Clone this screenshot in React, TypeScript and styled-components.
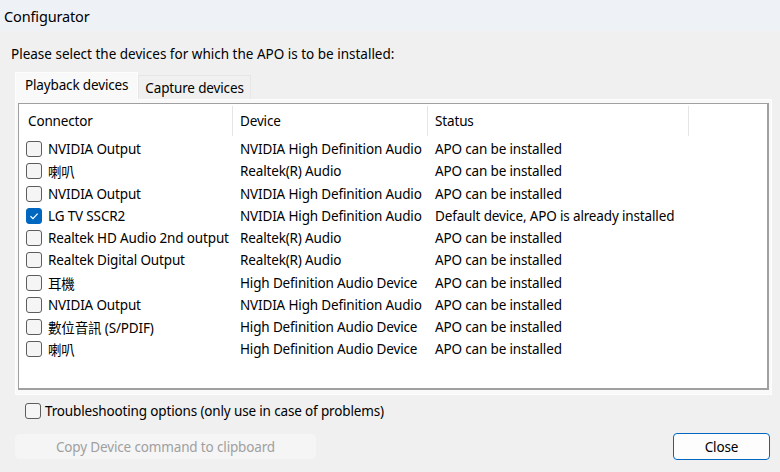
import React, { useState } from 'react';
import styled, { createGlobalStyle } from 'styled-components';

const GlobalStyle = createGlobalStyle`
  html, body {
    margin: 0;
    padding: 0;
    background: #f0f0f0;
  }
  body {
    font-family: "Noto Sans", "Noto Sans CJK TC", sans-serif;
    font-size: 13.5px;
    letter-spacing: -0.15px;
    color: #000;
  }
`;

interface Device {
  connector: string;
  device: string;
  status: string;
  checked: boolean;
}

const devices: Device[] = [
  { connector: 'NVIDIA Output', device: 'NVIDIA High Definition Audio', status: 'APO can be installed', checked: false },
  { connector: '喇叭', device: 'Realtek(R) Audio', status: 'APO can be installed', checked: false },
  { connector: 'NVIDIA Output', device: 'NVIDIA High Definition Audio', status: 'APO can be installed', checked: false },
  { connector: 'LG TV SSCR2', device: 'NVIDIA High Definition Audio', status: 'Default device, APO is already installed', checked: true },
  { connector: 'Realtek HD Audio 2nd output', device: 'Realtek(R) Audio', status: 'APO can be installed', checked: false },
  { connector: 'Realtek Digital Output', device: 'Realtek(R) Audio', status: 'APO can be installed', checked: false },
  { connector: '耳機', device: 'High Definition Audio Device', status: 'APO can be installed', checked: false },
  { connector: 'NVIDIA Output', device: 'NVIDIA High Definition Audio', status: 'APO can be installed', checked: false },
  { connector: '數位音訊 (S/PDIF)', device: 'High Definition Audio Device', status: 'APO can be installed', checked: false },
  { connector: '喇叭', device: 'High Definition Audio Device', status: 'APO can be installed', checked: false },
];

const Window = styled.div`
  width: 780px;
  height: 472px;
  display: flex;
  flex-direction: column;
  overflow: hidden;
`;

const TitleBar = styled.div`
  height: 31px;
  background: #eef2f6;
  display: flex;
  align-items: center;
  padding-left: 4px;
  font-size: 14.5px;
`;

const Body = styled.div`
  flex: 1;
  padding: 10px 8px 0 15px;
  display: flex;
  flex-direction: column;
`;

const Prompt = styled.div`
  margin-left: -4px;
  height: 26px;
  display: flex;
  align-items: center;
  letter-spacing: 0;
`;

const TabStrip = styled.div`
  display: flex;
  align-items: flex-end;
  height: 28px;
  margin-top: 4px;
`;

const Tab = styled.div<{ active?: boolean }>`
  height: ${({ active }) => (active ? '28px' : '24px')};
  padding: 0 ${({ active }) => (active ? '9px' : '6px')};
  margin-bottom: ${({ active }) => (active ? '-1px' : '0')};
  background: ${({ active }) => (active ? '#f9f9f9' : '#f0f0f0')};
  border: 1px solid ${({ active }) => (active ? '#fdfdfd' : '#e6e6e6')};
  border-bottom: none;
  display: flex;
  align-items: ${({ active }) => (active ? 'flex-start' : 'center')};
  padding-top: ${({ active }) => (active ? '3px' : '0')};
  box-sizing: border-box;
  z-index: ${({ active }) => (active ? 1 : 0)};
`;

const TabPanel = styled.div`
  width: 757px;
  height: 296px;
  box-sizing: border-box;
  background: #f9f9f9;
  border: 1px solid #fdfdfd;
  padding: 3px 2px 4px 2px;
`;

const ListBox = styled.div`
  height: 100%;
  box-sizing: border-box;
  background: #fff;
  border-top: 1px solid #a0a0a0;
  border-left: 1px solid #a0a0a0;
  border-right: 2px solid #a0a0a0;
  border-bottom: 2px solid #a0a0a0;
`;

const columns = '214px 195px 261px 1fr';

const HeaderRow = styled.div`
  display: grid;
  grid-template-columns: ${columns};
  height: 34px;
`;

const HeaderCell = styled.div<{ last?: boolean }>`
  display: flex;
  align-items: center;
  padding-left: ${({ last }) => (last ? '0' : '7px')};
  position: relative;
  &::after {
    content: '';
    display: ${({ last }) => (last ? 'none' : 'block')};
    position: absolute;
    right: 0;
    top: 2px;
    bottom: 2px;
    width: 1px;
    background: #e5e5e5;
  }
`;

const FirstHeaderCell = styled(HeaderCell)`
  padding-left: 9px;
`;

const Row = styled.div`
  display: grid;
  grid-template-columns: ${columns};
  height: 22.25px;
  align-items: center;
`;

const Cell = styled.div`
  padding-left: 7px;
  white-space: nowrap;
  overflow: hidden;
`;

const ConnectorCell = styled.div`
  display: flex;
  align-items: center;
  gap: 6px;
  padding-left: 7px;
  white-space: nowrap;
  overflow: hidden;
`;

const Box = styled.span<{ checked?: boolean }>`
  width: 16px;
  height: 16px;
  box-sizing: border-box;
  border-radius: 3px;
  border: 1px solid ${({ checked }) => (checked ? '#0067c0' : '#5d5d5d')};
  background: ${({ checked }) => (checked ? '#0067c0' : '#f5f5f5')};
  display: flex;
  align-items: center;
  justify-content: center;
  flex-shrink: 0;
`;

const Check: React.FC<{ checked: boolean }> = ({ checked }) => (
  <Box checked={checked}>
    {checked && (
      <svg width="10" height="10" viewBox="0 0 10 10">
        <path d="M1.5 5.2 L4 7.6 L8.6 2.6" fill="none" stroke="#fff" strokeWidth="1.2" />
      </svg>
    )}
  </Box>
);

const OptionRow = styled.label`
  display: flex;
  align-items: center;
  gap: 4px;
  margin-top: 8px;
  margin-left: 10px;
  height: 16px;
`;

const ButtonRow = styled.div`
  display: flex;
  justify-content: space-between;
  align-items: center;
  margin-top: 14px;
  padding-right: 2px;
`;

const CopyButton = styled.div`
  width: 301px;
  height: 25px;
  border-radius: 4px;
  background: #f5f5f5;
  border: 1px solid #f5f5f5;
  color: #a0a0a0;
  display: flex;
  align-items: center;
  justify-content: center;
  box-sizing: border-box;
`;

const CloseButton = styled.div`
  width: 97px;
  height: 27px;
  border-radius: 4px;
  background: #fdfdfd;
  border: 1px solid #0067c0;
  display: flex;
  align-items: center;
  justify-content: center;
  box-sizing: border-box;
`;

const App: React.FC = () => {
  const [tab] = useState(0);

  return (
    <>
      <GlobalStyle />
      <Window>
        <TitleBar>Configurator</TitleBar>
        <Body>
          <Prompt>Please select the devices for which the APO is to be installed:</Prompt>
          <TabStrip>
            <Tab active={tab === 0}>Playback devices</Tab>
            <Tab active={tab === 1}>Capture devices</Tab>
          </TabStrip>
          <TabPanel>
            <ListBox>
              <HeaderRow>
                <FirstHeaderCell>Connector</FirstHeaderCell>
                <HeaderCell>Device</HeaderCell>
                <HeaderCell>Status</HeaderCell>
                <HeaderCell last />
              </HeaderRow>
              {devices.map((d, i) => (
                <Row key={i}>
                  <ConnectorCell>
                    <Check checked={d.checked} />
                    {d.connector}
                  </ConnectorCell>
                  <Cell>{d.device}</Cell>
                  <Cell>{d.status}</Cell>
                  <Cell />
                </Row>
              ))}
            </ListBox>
          </TabPanel>
          <OptionRow>
            <Check checked={false} />
            Troubleshooting options (only use in case of problems)
          </OptionRow>
          <ButtonRow>
            <CopyButton>Copy Device command to clipboard</CopyButton>
            <CloseButton>Close</CloseButton>
          </ButtonRow>
        </Body>
      </Window>
    </>
  );
};

export default App;
